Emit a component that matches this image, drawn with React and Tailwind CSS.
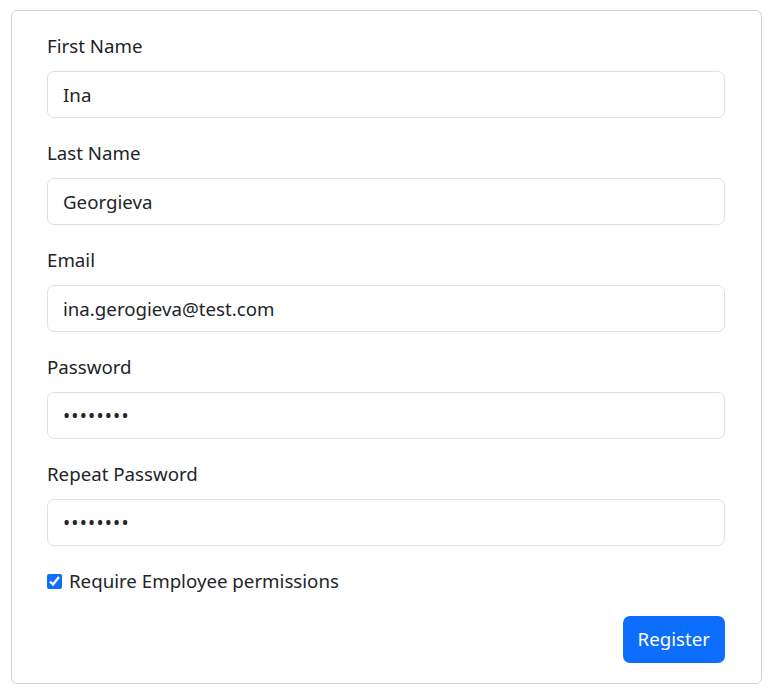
import React from 'react';

const fields = [
  { label: 'First Name', type: 'text', value: 'Ina' },
  { label: 'Last Name', type: 'text', value: 'Georgieva' },
  { label: 'Email', type: 'email', value: 'ina.gerogieva@test.com' },
  { label: 'Password', type: 'password', value: '12345678' },
  { label: 'Repeat Password', type: 'password', value: '12345678' },
];

export default function App() {
  return (
    <div className="bg-white min-h-[692px] pt-[10px] pl-[11px] font-['Segoe_UI','Noto_Sans',sans-serif] text-[#212529]">
      <div className="w-[751px] border border-[#d3d3d3] rounded-[6px] pt-[20px] pb-[20px] pl-[35px] pr-[36px]">
        <form className="flex flex-col">
          {fields.map((f) => (
            <div key={f.label} className="mb-[20px]">
              <label className="block text-[18.7px] leading-[30px] mb-[10px]">{f.label}</label>
              <input
                type={f.type}
                defaultValue={f.value}
                readOnly
                className={
                  f.type === 'password'
                    ? 'w-full h-[47px] px-[15px] border border-[#dee2e6] rounded-[7px] text-[19px] tracking-[1.2px] text-[#212529] outline-none bg-white'
                    : 'w-full h-[47px] px-[15px] border border-[#dee2e6] rounded-[7px] text-[18.7px] text-[#212529] outline-none bg-white'
                }
              />
            </div>
          ))}

          {/* Permissions checkbox */}
          <label className="flex items-center h-[30px] text-[18.7px]">
            <input type="checkbox" defaultChecked className="w-[15px] h-[15px] mr-[7px] accent-[#0d6efd]" />
            Require Employee permissions
          </label>

          <div className="flex justify-end mt-[20px]">
            <button type="button" className="h-[47px] px-[15px] bg-[#0d6efd] text-white text-[18.7px] rounded-[7px]">
              Register
            </button>
          </div>
        </form>
      </div>
    </div>
  );
}
